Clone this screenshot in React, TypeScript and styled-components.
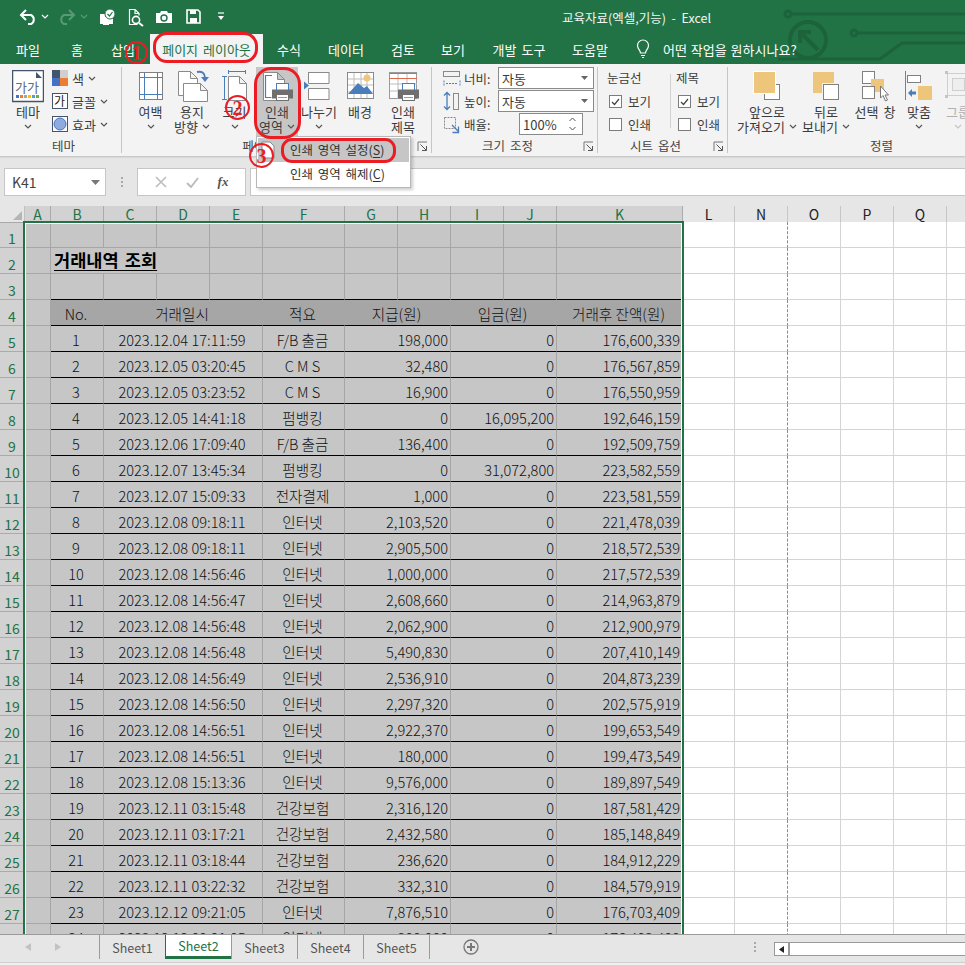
import React from 'react'
import styled, { createGlobalStyle } from 'styled-components'

const FONT = '"Noto Sans CJK KR", "Noto Sans", sans-serif'
const GREEN = '#217346'
const RED = '#ed1c24'
const COLS = '25px 26px 53px 53px 53px 53px 82px 53px 53px 53px 53px 126px 52px 53px 53px 53px 53px 53px'

const Global = createGlobalStyle`
  html, body { margin: 0; padding: 0; background: #fff; }
  body { font-family: ${FONT}; }
`

const Page = styled.div`
  position: relative;
  width: 965px;
  height: 965px;
  overflow: hidden;
  display: flex;
  flex-direction: column;
  background: #e6e6e6;
`

/* ---------- title bar and tabs ---------- */
const Head = styled.header`
  position: relative;
  height: 64px;
  background: ${GREEN};
  color: #fff;
`
const Circuit = styled.svg`
  position: absolute;
  left: 770px;
  top: 0;
`
const TitleBar = styled.div`
  position: relative;
  height: 34px;
  display: flex;
  align-items: center;
`
const Qat = styled.div`
  width: 240px;
  height: 34px;
  flex: none;
`
const Title = styled.div`
  margin-left: 322px;
  font-size: 12.5px;
  white-space: pre;
  color: #f2f7f4;
`
const Tabs = styled.nav`
  position: relative;
  height: 30px;
  display: flex;
  align-items: stretch;
`
const Tab = styled.div<{ w: number; active?: boolean }>`
  width: ${p => p.w}px;
  flex: none;
  display: flex;
  align-items: center;
  justify-content: center;
  font-size: 13px;
  word-spacing: 2px;
  white-space: nowrap;
  background: ${p => (p.active ? '#f3f3f3' : 'transparent')};
  color: ${p => (p.active ? GREEN : '#fff')};
  margin-left: ${p => (p.active ? '2px' : '0')};
`
const Ask = styled.div`
  margin-left: 16px;
  display: flex;
  align-items: center;
  gap: 12px;
  font-size: 13px;
  word-spacing: 1px;
`

/* ---------- ribbon ---------- */
const Ribbon = styled.div`
  height: 93px;
  flex: none;
  display: flex;
  background: #f3f3f3;
  border-bottom: 1px solid #c9c9c9;
  padding-top: 3px;
  box-sizing: border-box;
  overflow: hidden;
`
const Group = styled.section<{ w: number; pad?: number }>`
  position: relative;
  width: ${p => p.w}px;
  height: 86px;
  flex: none;
  box-sizing: border-box;
  display: flex;
  flex-direction: column;
  padding-left: ${p => p.pad ?? 0}px;
  border-right: 1px solid #c6c6c6;
`
const GroupBody = styled.div`
  height: 73px;
  display: flex;
  align-items: flex-start;
  flex: none;
`
const GroupFoot = styled.div`
  display: flex;
  align-items: center;
  height: 14px;
  margin-top: -1px;
`
const GroupLabel = styled.div`
  flex: 1;
  text-align: center;
  font-size: 12.5px;
  line-height: 14px;
  word-spacing: 2px;
  color: #444;
`
const Launcher = styled.svg`
  flex: none;
  margin-right: 3px;
`
const BigBtn = styled.div<{ w: number; active?: boolean }>`
  width: ${p => p.w}px;
  height: 69px;
  flex: none;
  box-sizing: border-box;
  padding-top: 3px;
  display: flex;
  flex-direction: column;
  align-items: center;
  background: ${p => (p.active ? '#c6c6c6' : 'transparent')};
  svg.big { display: block; flex: none; }
`
const BigLine = styled.div<{ dim?: boolean }>`
  font-size: 13px;
  line-height: 15px;
  height: 15px;
  white-space: nowrap;
  word-spacing: 2px;
  color: ${p => (p.dim ? '#b1b1b1' : '#3c3c3c')};
  display: flex;
  align-items: center;
  gap: 4px;
`
const SmallCol = styled.div`
  display: flex;
  flex-direction: column;
  gap: 7px;
  padding-top: 3px;
  margin-left: 2px;
`
const SmallRow = styled.div`
  display: flex;
  align-items: center;
  height: 16px;
  gap: 4px;
  font-size: 13px;
  color: #3c3c3c;
`
const SizeCol = styled.div`
  display: flex;
  flex-direction: column;
  gap: 1px;
  padding-left: 11px;
`
const SizeRow = styled.div`
  display: flex;
  align-items: center;
  height: 22px;
  font-size: 12.5px;
  color: #3c3c3c;
  span { width: 34px; margin-left: 3px; flex: none; }
`
const Field = styled.div<{ w: number; shift?: number }>`
  width: ${p => p.w}px;
  height: 22px;
  margin-left: ${p => p.shift ?? 0}px;
  box-sizing: border-box;
  border: 1px solid #8a8a8a;
  background: #fff;
  display: flex;
  align-items: center;
  justify-content: space-between;
  padding: 0 5px 0 3px;
  font-size: 13px;
  color: #3c3c3c;
`
const OptGrid = styled.div`
  display: grid;
  grid-template-columns: 63px 1fr;
  padding-left: 9px;
`
const OptCol = styled.div<{ line?: boolean }>`
  position: relative;
  padding-left: ${p => (p.line ? '6px' : '0')};
  ${p =>
    p.line &&
    `
    &:before {
      content: '';
      position: absolute;
      left: 0;
      top: 7px;
      height: 54px;
      width: 1px;
      background: #d2d2d2;
    }
  `}
`
const OptHead = styled.div`
  height: 23px;
  line-height: 22px;
  font-size: 12.5px;
  color: #3c3c3c;
`
const OptRow = styled.div`
  height: 23px;
  display: flex;
  align-items: center;
  gap: 6px;
  padding-left: 2px;
  font-size: 12.5px;
  color: #3c3c3c;
`
const Check = styled.div`
  width: 13px;
  height: 13px;
  box-sizing: border-box;
  border: 1px solid #7d7d7d;
  background: #fff;
  display: flex;
  align-items: center;
  justify-content: center;
`

/* ---------- formula bar ---------- */
const FormulaBar = styled.div`
  height: 49px;
  flex: none;
  box-sizing: border-box;
  padding: 10px 0 10px 4px;
  display: flex;
  align-items: stretch;
  background: #e6e6e6;
  border-top: 1px solid #d8d8d8;
`
const NameBox = styled.div`
  width: 102px;
  box-sizing: border-box;
  background: #fff;
  border: 1px solid #c6c6c6;
  display: flex;
  align-items: center;
  justify-content: space-between;
  padding: 0 5px 0 7px;
  font-size: 14px;
  color: #444;
`
const Dots = styled.div`
  width: 31px;
  display: flex;
  flex-direction: column;
  align-items: center;
  justify-content: center;
  gap: 2px;
  i { width: 2px; height: 2px; background: #a8a8a8; display: block; }
`
const FxBox = styled.div`
  width: 109px;
  box-sizing: border-box;
  background: #fff;
  border: 1px solid #c6c6c6;
  display: flex;
  align-items: center;
  justify-content: space-around;
  padding: 0 7px;
`
const FxText = styled.span`
  font-family: "Liberation Serif", serif;
  font-style: italic;
  font-weight: 700;
  font-size: 13px;
  color: #555;
`
const FormulaInput = styled.div`
  flex: 1;
  margin-left: 4px;
  background: #fff;
  border: 1px solid #c6c6c6;
  border-right: 0;
`

/* ---------- sheet ---------- */
const Sheet = styled.div`
  position: relative;
  flex: none;
  height: 728px;
  overflow: hidden;
  background: #fff;
`
const HeadRow = styled.div`
  display: grid;
  grid-template-columns: ${COLS};
  height: 16px;
`
const Corner = styled.div`
  background: #e6e6e6;
  border-right: 1px solid #c0c0c0;
  border-bottom: 1px solid #a8a8a8;
  position: relative;
  &:after {
    content: '';
    position: absolute;
    right: 2px;
    bottom: 2px;
    border-style: solid;
    border-width: 0 0 9px 9px;
    border-color: transparent transparent #b5b5b5 transparent;
  }
`
const ColHead = styled.div<{ sel?: boolean }>`
  box-sizing: border-box;
  display: flex;
  align-items: center;
  justify-content: center;
  font-size: 14px;
  line-height: 16px;
  background: ${p => (p.sel ? '#d2d2d2' : '#e6e6e6')};
  color: ${p => (p.sel ? GREEN : '#222')};
  border-right: 1px solid ${p => (p.sel ? '#ababab' : '#c6c6c6')};
  border-bottom: 1px solid ${p => (p.sel ? GREEN : '#a8a8a8')};
`
const Row = styled.div`
  display: grid;
  grid-template-columns: ${COLS};
  height: 26px;
`
const RowHead = styled.div`
  box-sizing: border-box;
  background: #d2d2d2;
  color: ${GREEN};
  font-size: 14px;
  line-height: 18px;
  display: flex;
  align-items: flex-end;
  justify-content: center;
  border-right: 1px solid #ababab;
  border-bottom: 1px solid #ababab;
`
const Cell = styled.div<{
  span?: number
  align?: 'left' | 'center' | 'right'
  black?: boolean
  noRight?: boolean
  head?: boolean
}>`
  grid-column: span ${p => p.span ?? 1};
  box-sizing: border-box;
  min-width: 0;
  background: ${p => (p.head ? '#a6a6a6' : '#c6c6c6')};
  color: #111;
  font-size: 14.6px;
  font-weight: 300;
  line-height: 23px;
  white-space: nowrap;
  overflow: hidden;
  padding: 0 2px 0 0;
  text-align: ${p => p.align ?? 'center'};
  display: flex;
  flex-direction: column;
  justify-content: flex-end;
  border-right: 1px solid ${p => (p.noRight ? 'transparent' : '#a6a6a6')};
  border-bottom: 1px solid ${p => (p.black ? '#000' : '#a6a6a6')};
`
const Blank = styled.div<{ dashed?: boolean }>`
  box-sizing: border-box;
  background: #fff;
  border-right: 1px ${p => (p.dashed ? 'dashed #8a8a8a' : 'solid #d4d4d4')};
  border-bottom: 1px solid #d4d4d4;
`
const SheetTitle = styled.div`
  grid-column: span 3;
  box-sizing: border-box;
  background: #c6c6c6;
  border-right: 1px solid #a6a6a6;
  border-bottom: 1px solid #a6a6a6;
  padding-left: 3px;
  font-size: 17.6px;
  font-weight: 700;
  line-height: 24px;
  color: #000;
  text-decoration: underline;
  text-underline-offset: 3px;
  white-space: nowrap;
  word-spacing: 2px;
`
const Selection = styled.div`
  position: absolute;
  left: 23px;
  top: 15px;
  width: 661px;
  height: 800px;
  box-sizing: border-box;
  border: 2px solid ${GREEN};
  box-shadow: inset 0 0 0 1px #fff;
  pointer-events: none;
`

/* ---------- sheet tabs ---------- */
const Strip = styled.div`
  height: 28px;
  flex: none;
  box-sizing: border-box;
  display: flex;
  align-items: flex-start;
  background: #e6e6e6;
  border-top: 1px solid #9b9b9b;
`
const StripNav = styled.div`
  width: 99px;
  height: 24px;
  flex: none;
  display: flex;
  align-items: center;
  gap: 24px;
  padding-left: 25px;
  box-sizing: border-box;
`
const SheetTab = styled.div<{ active?: boolean }>`
  width: 66px;
  height: 24px;
  flex: none;
  box-sizing: border-box;
  display: flex;
  align-items: center;
  justify-content: center;
  font-size: 12.5px;
  border-left: 1px solid #9b9b9b;
  background: ${p => (p.active ? '#fff' : 'transparent')};
  color: ${p => (p.active ? GREEN : '#555')};
  ${p => p.active && `height: 24px; border-bottom: 3px solid ${GREEN}; border-left: 1px solid ${GREEN}; margin-top: 0;`}
`
const PlusWrap = styled.div`
  width: 306px;
  height: 24px;
  box-sizing: border-box;
  border-left: 1px solid #9b9b9b;
  padding-left: 33px;
  display: flex;
  align-items: center;
`
const ScrollDots = styled(Dots)`
  width: 39px;
  height: 24px;
  margin-right: 0;
`
const ScrollBar = styled.div`
  flex: 1;
  height: 14px;
  margin-top: 7px;
  box-sizing: border-box;
  background: #fff;
  border: 1px solid #999;
  border-right: 0;
  display: flex;
`
const ScrollArrow = styled.div`
  width: 13px;
  display: flex;
  align-items: center;
  justify-content: center;
  border-right: 2px solid #999;
`
const Foot = styled.div`
  flex: 1;
  background: #f0f0f0;
  border-top: 1px solid #cfcfcf;
`

/* ---------- dropdown and red marks ---------- */
const Menu = styled.div`
  position: absolute;
  left: 256px;
  top: 136px;
  width: 155px;
  height: 52px;
  box-sizing: border-box;
  background: #fff;
  border: 1px solid #b8b8b8;
  box-shadow: 2px 2px 3px rgba(0, 0, 0, 0.2);
  padding: 1px;
`
const MenuItem = styled.div<{ hot?: boolean }>`
  height: 24px;
  line-height: 23px;
  padding-left: 32px;
  font-size: 12.5px;
  word-spacing: 2px;
  white-space: nowrap;
  color: #333;
  background: ${p => (p.hot ? '#c6c6c6' : 'transparent')};
  u { text-underline-offset: 2px; }
`
const MenuIcon = styled.svg`
  position: absolute;
  left: 4px;
  top: 4px;
`
const Mark = styled.div<{ x: number; y: number; w: number; h: number; r: number }>`
  position: absolute;
  left: ${p => p.x}px;
  top: ${p => p.y}px;
  width: ${p => p.w}px;
  height: ${p => p.h}px;
  box-sizing: border-box;
  border: 3px solid ${RED};
  border-radius: ${p => p.r}px;
`
const Num = styled.div<{ x: number; y: number; s: number }>`
  position: absolute;
  left: ${p => p.x}px;
  top: ${p => p.y}px;
  width: ${p => p.s}px;
  height: ${p => p.s}px;
  box-sizing: border-box;
  border: 2px solid ${RED};
  border-radius: 50%;
  display: flex;
  align-items: center;
  justify-content: center;
  font-family: "Liberation Serif", serif;
  font-weight: 700;
  font-size: 20px;
  line-height: 1;
  color: ${RED};
`

/* ---------- icons ---------- */
const Chev = ({ c = '#555' }: { c?: string }) => (
  <svg width="8" height="5" viewBox="0 0 8 5">
    <path d="M1 1l3 3 3-3" fill="none" stroke={c} strokeWidth="1.2" />
  </svg>
)

const Printer = ({ x, y }: { x: number; y: number }) => (
  <g transform={`translate(${x} ${y})`}>
    <rect x="4.5" y="0.5" width="12" height="7" fill="#fff" stroke="#4a7ebb" />
    <path d="M0 6.5h21v9h-21z" fill="#6f6f6f" />
    <rect x="4.5" y="11.5" width="12" height="6" fill="#fff" stroke="#6f6f6f" />
    <path d="M6 14.5h9" stroke="#9a9a9a" />
  </g>
)

const Big = ({ cx, w = 40, children }: { cx: number; w?: number; children: React.ReactNode }) => (
  <svg className="big" width={w} height="34" viewBox={`${cx - w / 2} 70 ${w} 34`}>
    {children}
  </svg>
)

const Page1 = ({ x, y, w, h }: { x: number; y: number; w: number; h: number }) => (
  <path
    d={`M${x}.5 ${y}.5h${w - 7}l7 7v${h - 7}h-${w}z M${x + w - 7}.5 ${y}.5v7h7`}
    fill="#fff"
    stroke="#8a8a8a"
  />
)

const LauncherIcon = () => (
  <Launcher width="11" height="11" viewBox="0 0 11 11">
    <path d="M1 10V1h9" fill="none" stroke="#777" />
    <path d="M3.5 3.5l5.5 5.5M9.5 5v4.5H5" fill="none" stroke="#555" />
  </Launcher>
)

const Circ = () => (
  <svg width="195" height="64" viewBox="0 0 195 64" fill="none" stroke="#1c633c" strokeWidth="3">
    <circle cx="18" cy="14" r="3" />
    <path d="M21 14h174" />
    <circle cx="38" cy="40" r="18" strokeWidth="4" />
    <path d="M31 33l17 17M30 43v-11h11" strokeWidth="4" />
    <circle cx="84" cy="33" r="3" />
    <path d="M87 33h108" />
    <path d="M8 59h102l22-16h63" />
  </svg>
)

const QatIcons = () => (
  <svg width="240" height="34" viewBox="0 0 240 34">
    <g fill="none" stroke="#fff" strokeWidth="2">
      <path d="M22 15h9a5 5 0 0 1 0 9h-3M26 10l-5 5 5 5" />
      <path d="M42 15l3 3 3-3" strokeWidth="1.2" />
    </g>
    <g fill="none" stroke="#579a77" strokeWidth="2">
      <path d="M73 15h-9a5 5 0 0 0 0 9h3M69 10l5 5-5 5" />
      <path d="M81 15l3 3 3-3" strokeWidth="1.2" />
    </g>
    <path d="M100 14h5v-3h3v3h-3v3h8v7h-4v1h-6v-1h-3z" fill="#fff" />
    <circle cx="110" cy="14" r="5" fill="#fff" stroke={GREEN} />
    <path d="M107.5 14l2 2 3-4" stroke={GREEN} strokeWidth="1.2" fill="none" />
    <path d="M135 9.5h-5.5v15h8M135 9.5l4 4v2M135 9.5v4h4" fill="none" stroke="#fff" strokeWidth="1.2" />
    <circle cx="136" cy="20" r="3.6" fill="none" stroke="#fff" strokeWidth="1.6" />
    <path d="M139 23l4 3" stroke="#fff" strokeWidth="2" />
    <path d="M156 13h4l1-2h6l1 2h4v10h-16z" fill="#fff" />
    <circle cx="164" cy="18" r="3" fill="none" stroke={GREEN} strokeWidth="1.4" />
    <path d="M187 10h11l2 2v11h-13z" fill="none" stroke="#fff" strokeWidth="1.6" />
    <path d="M190 10h6v4h-6zM190 18h7v5h-7z" fill="#fff" />
    <path d="M218 13h6" stroke="#fff" strokeWidth="1.2" />
    <path d="M218 16h6l-3 4z" fill="#fff" />
  </svg>
)

/* ---------- data ---------- */
const NET = '인터넷'
const HEALTH = '건강보험'
const FB = 'F/B 출금'
const BANK = '펌뱅킹'
const rows: [string, string, string, string, string][] = [
  ['2023.12.04 17:11:59', FB, '198,000', '0', '176,600,339'],
  ['2023.12.05 03:20:45', 'C M S', '32,480', '0', '176,567,859'],
  ['2023.12.05 03:23:52', 'C M S', '16,900', '0', '176,550,959'],
  ['2023.12.05 14:41:18', BANK, '0', '16,095,200', '192,646,159'],
  ['2023.12.06 17:09:40', FB, '136,400', '0', '192,509,759'],
  ['2023.12.07 13:45:34', BANK, '0', '31,072,800', '223,582,559'],
  ['2023.12.07 15:09:33', '전자결제', '1,000', '0', '223,581,559'],
  ['2023.12.08 09:18:11', NET, '2,103,520', '0', '221,478,039'],
  ['2023.12.08 09:18:11', NET, '2,905,500', '0', '218,572,539'],
  ['2023.12.08 14:56:46', NET, '1,000,000', '0', '217,572,539'],
  ['2023.12.08 14:56:47', NET, '2,608,660', '0', '214,963,879'],
  ['2023.12.08 14:56:48', NET, '2,062,900', '0', '212,900,979'],
  ['2023.12.08 14:56:48', NET, '5,490,830', '0', '207,410,149'],
  ['2023.12.08 14:56:49', NET, '2,536,910', '0', '204,873,239'],
  ['2023.12.08 14:56:50', NET, '2,297,320', '0', '202,575,919'],
  ['2023.12.08 14:56:51', NET, '2,922,370', '0', '199,653,549'],
  ['2023.12.08 14:56:51', NET, '180,000', '0', '199,473,549'],
  ['2023.12.08 15:13:36', NET, '9,576,000', '0', '189,897,549'],
  ['2023.12.11 03:15:48', HEALTH, '2,316,120', '0', '187,581,429'],
  ['2023.12.11 03:17:21', HEALTH, '2,432,580', '0', '185,148,849'],
  ['2023.12.11 03:18:44', HEALTH, '236,620', '0', '184,912,229'],
  ['2023.12.11 03:22:32', HEALTH, '332,310', '0', '184,579,919'],
  ['2023.12.12 09:21:05', NET, '7,876,510', '0', '176,703,409'],
  ['2023.12.12 09:21:05', NET, '300,000', '0', '176,403,409'],
]

const selCols = ['A', 'B', 'C', 'D', 'E', 'F', 'G', 'H', 'I', 'J', 'K']
const offCols = ['L', 'N', 'O', 'P', 'Q', '']

const RightBlanks = () => (
  <>
    <Blank />
    <Blank dashed />
    <Blank />
    <Blank />
    <Blank />
    <Blank />
  </>
)

const Top = ({ n, black, title }: { n: number; black?: boolean; title?: boolean }) => (
  <Row>
    <RowHead>{n}</RowHead>
    <Cell />
    {title ? <SheetTitle>거래내역 조회</SheetTitle> : null}
    {(title ? ['E', 'F', 'G', 'H', 'I', 'J', 'K'] : ['B', 'C', 'D', 'E', 'F', 'G', 'H', 'I', 'J', 'K']).map(c => (
      <Cell key={c} black={black} />
    ))}
    <Blank />
    <Blank dashed />
    <Blank />
    <Blank />
    <Blank />
    <Blank />
  </Row>
)

export default function App() {
  return (
    <Page>
      <Global />
      <Head>
        <Circuit as="div" style={{ width: 195, height: 64 }}>
          <Circ />
        </Circuit>
        <TitleBar>
          <Qat>
            <QatIcons />
          </Qat>
          <Title>교육자료(엑셀,기능)  -  Excel</Title>
        </TitleBar>
        <Tabs>
          <Tab w={56}>파일</Tab>
          <Tab w={42}>홈</Tab>
          <Tab w={50}>삽입</Tab>
          <Tab w={113} active>
            페이지 레이아웃
          </Tab>
          <Tab w={52}>수식</Tab>
          <Tab w={62}>데이터</Tab>
          <Tab w={52}>검토</Tab>
          <Tab w={48}>보기</Tab>
          <Tab w={84}>개발 도구</Tab>
          <Tab w={58}>도움말</Tab>
          <Ask>
            <svg width="16" height="20" viewBox="0 0 16 20" fill="none" stroke="#fff" strokeWidth="1.2">
              <path d="M5.5 14c0-3-3-4-3-7.500a5.500 5.500 0 0 1 11 0c0 3.500-3 4.500-3 7.500z" />
              <path d="M6 16.500h4M7 18.500h2" />
            </svg>
            어떤 작업을 원하시나요?
          </Ask>
        </Tabs>
      </Head>

      <Ribbon>
        <Group w={122} pad={6}>
          <GroupBody>
            <BigBtn w={44}>
              <svg className="big" width="32" height="34" viewBox="12 70 32 34">
                <rect x="12.500" y="70.500" width="31" height="31" fill="#fff" stroke="#44546a" strokeWidth="1.500" />
                <path d="M36 72l6 6h-6z" fill="#44546a" />
                <text x="15" y="92" fontSize="13" fill="#5a6b85" fontFamily={FONT}>
                  가가
                </text>
                {['#4472c4', '#ed7d31', '#a5a5a5', '#ffc000', '#5b9bd5', '#70ad47'].map((c, i) => (
                  <rect key={c} x={16 + i * 4} y="95" width="3" height="3" fill={c} />
                ))}
              </svg>
              <BigLine>테마</BigLine>
              <BigLine>
                <Chev />
              </BigLine>
            </BigBtn>
            <SmallCol>
              <SmallRow>
                <svg width="16" height="16" viewBox="0 0 16 16">
                  <rect width="8" height="8" fill="#44546a" />
                  <rect x="8" width="8" height="8" fill="#cfcfcf" />
                  <rect y="8" width="8" height="8" fill="#4472c4" />
                  <rect x="8" y="8" width="8" height="8" fill="#ed7d31" />
                </svg>
                색 <Chev />
              </SmallRow>
              <SmallRow>
                <svg width="16" height="16" viewBox="0 0 16 16">
                  <rect x="0.500" y="0.500" width="15" height="15" fill="#fff" stroke="#44546a" />
                  <text x="2" y="13" fontSize="12" fill="#222" fontFamily={FONT}>
                    가
                  </text>
                </svg>
                글꼴 <Chev />
              </SmallRow>
              <SmallRow>
                <svg width="16" height="16" viewBox="0 0 16 16">
                  <rect x="0.500" y="0.500" width="15" height="15" fill="#fff" stroke="#44546a" />
                  <circle cx="8" cy="8" r="6" fill="#8faadc" stroke="#4472c4" />
                </svg>
                효과 <Chev />
              </SmallRow>
            </SmallCol>
          </GroupBody>
          <GroupFoot>
            <GroupLabel>테마</GroupLabel>
          </GroupFoot>
        </Group>

        <Group w={310} pad={8}>
          <GroupBody>
            <BigBtn w={41}>
              <Big cx={151}>
                <rect x="139.500" y="72.500" width="23" height="27" fill="#fff" stroke="#808080" />
                <path d="M144.500 73v26M157.500 73v26M140 77.500h22M140 94.500h22" stroke="#4a7ebb" />
              </Big>
              <BigLine>여백</BigLine>
              <BigLine>
                <Chev />
              </BigLine>
            </BigBtn>
            <BigBtn w={42}>
              <Big cx={192}>
                <Page1 x={178} y={71} w={19} h={24} />
                <Page1 x={183} y={83} w={24} h={18} />
                <path d="M197 72c5-1 8 1 8 6" fill="none" stroke="#4a7ebb" strokeWidth="2" />
                <path d="M201 77h8l-4 5z" fill="#4a7ebb" />
              </Big>
              <BigLine>용지</BigLine>
              <BigLine>
                방향 <Chev />
              </BigLine>
            </BigBtn>
            <BigBtn w={43}>
              <Big cx={236}>
                <Page1 x={229} y={76} w={18} h={24} />
                <path d="M229 71.500h18M229.500 69v5M246.500 69v5M225.500 76v24M223 76.500h5M223 99.500h5" stroke="#4a7ebb" fill="none" />
              </Big>
              <BigLine>크기</BigLine>
              <BigLine>
                <Chev />
              </BigLine>
            </BigBtn>
            <BigBtn w={42} active>
              <Big cx={277}>
                <Page1 x={263} y={72} w={21} h={28} />
                <path d="M272 75.500h-6.500v22h6" fill="none" stroke="#4a7ebb" strokeWidth="1.200" />
                <Printer x={272} y={83} />
              </Big>
              <BigLine>인쇄</BigLine>
              <BigLine>
                영역 <Chev />
              </BigLine>
            </BigBtn>
            <BigBtn w={42}>
              <Big cx={319}>
                <path d="M308.500 72v11.500h20.500V72M308.500 100v-11.500h20.500V100M308 72.500h21M308 99.500h21" fill="#fff" stroke="#8a8a8a" />
                <path d="M304 81.500l5 4-5 4z" fill="#4a7ebb" />
              </Big>
              <BigLine>나누기</BigLine>
              <BigLine>
                <Chev />
              </BigLine>
            </BigBtn>
            <BigBtn w={40}>
              <Big cx={360}>
                <rect x="347.500" y="72.500" width="26" height="26" fill="#fff" stroke="#8a8a8a" />
                <path d="M354 73v25M361 73v25M367 73v25M348 79h25M348 85h25M348 92h25" stroke="#bdbdbd" />
                <circle cx="367" cy="78" r="3.500" fill="#edc67c" />
                <path d="M348 94l10-11 6 5 3-2 6 8z" fill="#4a7ebb" />
              </Big>
              <BigLine>배경</BigLine>
            </BigBtn>
            <BigBtn w={46}>
              <Big cx={403}>
                <rect x="389.500" y="72.500" width="27" height="26" fill="#fff" stroke="#9a9a9a" />
                <path d="M398 73v26M407 73v26M390 84h27M390 91h27" stroke="#bdbdbd" />
                <path d="M389 73.500h28M389 78.500h28" stroke="#d9694a" />
                <Printer x={398} y={83} />
              </Big>
              <BigLine>인쇄</BigLine>
              <BigLine>제목</BigLine>
            </BigBtn>
          </GroupBody>
          <GroupFoot>
            <GroupLabel>페이지 설정</GroupLabel>
            <LauncherIcon />
          </GroupFoot>
        </Group>

        <Group w={166}>
          <GroupBody>
            <SizeCol>
              <SizeRow>
                <svg width="18" height="20" viewBox="0 0 18 20" fill="none">
                  <rect x="0.500" y="3.500" width="16" height="5" stroke="#8a8a8a" />
                  <path d="M1 12.500v6M17 12.500v6M3 15.500h12" stroke="#4a7ebb" strokeDasharray="2 1" />
                </svg>
                <span>너비:</span>
                <Field w={96}>
                  자동
                  <svg width="7" height="4" viewBox="0 0 7 4">
                    <path d="M0 0h7l-3.500 4z" fill="#666" />
                  </svg>
                </Field>
              </SizeRow>
              <SizeRow>
                <svg width="18" height="20" viewBox="0 0 18 20" fill="none">
                  <rect x="10.500" y="2.500" width="5" height="16" stroke="#8a8a8a" />
                  <path d="M4 2v16M1 4.500l3-3 3 3M1 15.500l3 3 3-3" stroke="#4a7ebb" strokeWidth="1.300" />
                </svg>
                <span>높이:</span>
                <Field w={96}>
                  자동
                  <svg width="7" height="4" viewBox="0 0 7 4">
                    <path d="M0 0h7l-3.500 4z" fill="#666" />
                  </svg>
                </Field>
              </SizeRow>
              <SizeRow>
                <svg width="18" height="20" viewBox="0 0 18 20" fill="none">
                  <rect x="1.500" y="3.500" width="11" height="11" stroke="#8a8a8a" strokeDasharray="2 1" />
                  <path d="M9 11l7 7M15.500 12.500v6h-6" stroke="#4a7ebb" strokeWidth="1.300" />
                </svg>
                <span>배율:</span>
                <Field w={64} shift={21}>
                  100%
                  <svg width="9" height="18" viewBox="0 0 9 18" fill="none" stroke="#555">
                    <path d="M1.500 6l3-3 3 3M1.500 12l3 3 3-3" />
                  </svg>
                </Field>
              </SizeRow>
            </SizeCol>
          </GroupBody>
          <GroupFoot>
            <GroupLabel>크기 조정</GroupLabel>
            <LauncherIcon />
          </GroupFoot>
        </Group>

        <Group w={130}>
          <GroupBody>
            <OptGrid>
              <OptCol>
                <OptHead>눈금선</OptHead>
                <OptRow>
                  <Check>
                    <svg width="9" height="8" viewBox="0 0 9 8">
                      <path d="M1 4l2.500 2.500L8 1" fill="none" stroke="#444" strokeWidth="1.200" />
                    </svg>
                  </Check>
                  보기
                </OptRow>
                <OptRow>
                  <Check />
                  인쇄
                </OptRow>
              </OptCol>
              <OptCol line>
                <OptHead>제목</OptHead>
                <OptRow>
                  <Check>
                    <svg width="9" height="8" viewBox="0 0 9 8">
                      <path d="M1 4l2.500 2.500L8 1" fill="none" stroke="#444" strokeWidth="1.200" />
                    </svg>
                  </Check>
                  보기
                </OptRow>
                <OptRow>
                  <Check />
                  인쇄
                </OptRow>
              </OptCol>
            </OptGrid>
          </GroupBody>
          <GroupFoot>
            <GroupLabel>시트 옵션</GroupLabel>
            <LauncherIcon />
          </GroupFoot>
        </Group>

        <Group w={300} pad={8}>
          <GroupBody>
            <BigBtn w={62}>
              <Big cx={767}>
                <rect x="764.500" y="84.500" width="15" height="15" fill="#fff" stroke="#808080" />
                <rect x="753" y="71" width="23" height="23" fill="#fff" />
                <rect x="754" y="72" width="21" height="21" fill="#edc67c" />
              </Big>
              <BigLine>앞으로</BigLine>
              <BigLine>
                가져오기 <Chev />
              </BigLine>
            </BigBtn>
            <BigBtn w={56}>
              <Big cx={826}>
                <rect x="813" y="72" width="21" height="21" fill="#edc67c" />
                <rect x="822" y="83" width="18" height="18" fill="#f3f3f3" />
                <rect x="823.500" y="84.500" width="15" height="15" fill="#fff" stroke="#808080" />
              </Big>
              <BigLine>뒤로</BigLine>
              <BigLine>
                보내기 <Chev />
              </BigLine>
            </BigBtn>
            <BigBtn w={42}>
              <Big cx={875}>
                <rect x="862.500" y="71.500" width="12" height="12" fill="#fff" stroke="#808080" />
                <rect x="871" y="79" width="13" height="13" fill="#edc67c" />
                <rect x="862.500" y="86.500" width="12" height="12" fill="#fff" stroke="#808080" />
                <path d="M880.500 86v12l2.500-2.500 2.500 5.500 2-1-2.500-5h3.500z" fill="#fff" stroke="#777" />
              </Big>
              <BigLine>선택 창</BigLine>
            </BigBtn>
            <BigBtn w={46}>
              <Big cx={919}>
                <path d="M905.500 71v29" stroke="#808080" />
                <rect x="907.500" y="75.500" width="13" height="7" fill="#fff" stroke="#808080" />
                <rect x="918" y="86" width="14" height="14" fill="#edc67c" />
                <path d="M908 93l4-4v2.500h4v3h-4v2.500z" fill="#4a7ebb" />
              </Big>
              <BigLine>맞춤</BigLine>
              <BigLine>
                <Chev />
              </BigLine>
            </BigBtn>
            <BigBtn w={32}>
              <Big cx={958}>
                <rect x="947.500" y="73.500" width="22" height="22" fill="none" stroke="#cfcfcf" />
                <rect x="952.500" y="78.500" width="12" height="12" fill="#eee" stroke="#cfcfcf" />
                <path d="M945 71h3v3h-3zM945 95h3v3h-3z" fill="#c4c4c4" />
              </Big>
              <BigLine dim>그룹</BigLine>
              <BigLine>
                <Chev c="#c4c4c4" />
              </BigLine>
            </BigBtn>
          </GroupBody>
          <GroupFoot>
            <GroupLabel>정렬</GroupLabel>
          </GroupFoot>
        </Group>
      </Ribbon>

      <FormulaBar>
        <NameBox>
          K41
          <svg width="9" height="5" viewBox="0 0 9 5">
            <path d="M0 0h9l-4.500 5z" fill="#777" />
          </svg>
        </NameBox>
        <Dots>
          <i />
          <i />
          <i />
        </Dots>
        <FxBox>
          <svg width="12" height="12" viewBox="0 0 12 12">
            <path d="M1 1l10 10M11 1L1 11" stroke="#bdbdbd" strokeWidth="1.600" />
          </svg>
          <svg width="13" height="11" viewBox="0 0 13 11">
            <path d="M1 6l4 4 7-9" fill="none" stroke="#bdbdbd" strokeWidth="2" />
          </svg>
          <FxText>fx</FxText>
        </FxBox>
        <FormulaInput />
      </FormulaBar>

      <Sheet>
        <HeadRow>
          <Corner />
          {selCols.map(c => (
            <ColHead key={c} sel>
              {c}
            </ColHead>
          ))}
          {offCols.map(c => (
            <ColHead key={c}>{c}</ColHead>
          ))}
        </HeadRow>
        <Top n={1} />
        <Top n={2} title />
        <Top n={3} black />
        <Row>
          <RowHead>4</RowHead>
          <Cell />
          <Cell head black noRight>
            No.
          </Cell>
          <Cell head black noRight span={3}>
            거래일시
          </Cell>
          <Cell head black noRight>
            적요
          </Cell>
          <Cell head black noRight span={2}>
            지급(원)
          </Cell>
          <Cell head black noRight span={2}>
            입금(원)
          </Cell>
          <Cell head black noRight>
            거래후 잔액(원)
          </Cell>
          <RightBlanks />
        </Row>
        {rows.map((r, i) => (
          <Row key={i}>
            <RowHead>{i + 5}</RowHead>
            <Cell />
            <Cell black>{i + 1}</Cell>
            <Cell black span={3}>
              {r[0]}
            </Cell>
            <Cell black>{r[1]}</Cell>
            <Cell black span={2} align="right">
              {r[2]}
            </Cell>
            <Cell black span={2} align="right">
              {r[3]}
            </Cell>
            <Cell black align="right">
              {r[4]}
            </Cell>
            <RightBlanks />
          </Row>
        ))}
        <Selection />
      </Sheet>

      <Strip>
        <StripNav>
          <svg width="6" height="8" viewBox="0 0 6 8">
            <path d="M6 0v8L0 4z" fill="#c2c2c2" />
          </svg>
          <svg width="6" height="8" viewBox="0 0 6 8">
            <path d="M0 0v8l6-4z" fill="#c2c2c2" />
          </svg>
        </StripNav>
        <SheetTab>Sheet1</SheetTab>
        <SheetTab active>Sheet2</SheetTab>
        <SheetTab>Sheet3</SheetTab>
        <SheetTab>Sheet4</SheetTab>
        <SheetTab>Sheet5</SheetTab>
        <PlusWrap>
          <svg width="16" height="16" viewBox="0 0 16 16" fill="none" stroke="#777">
            <circle cx="8" cy="8" r="7" strokeWidth="1.300" />
            <path d="M8 4v8M4 8h8" strokeWidth="2" />
          </svg>
        </PlusWrap>
        <ScrollDots>
          <i />
          <i />
          <i />
        </ScrollDots>
        <ScrollBar>
          <ScrollArrow>
            <svg width="5" height="7" viewBox="0 0 5 7">
              <path d="M5 0v7L0 3.500z" fill="#222" />
            </svg>
          </ScrollArrow>
        </ScrollBar>
      </Strip>
      <Foot />

      <Menu>
        <MenuIcon width="14" height="18" viewBox="0 0 14 18" fill="none" stroke="#888">
          <path d="M1 1h8l4 4v12H1z" fill="#fff" />
        </MenuIcon>
        <MenuItem hot>
          인쇄 영역 설정(<u>S</u>)
        </MenuItem>
        <MenuItem>
          인쇄 영역 해제(<u>C</u>)
        </MenuItem>
      </Menu>

      <Mark x={153} y={32} w={105} h={31} r={14} />
      <Mark x={254} y={67} w={47} h={72} r={17} />
      <Mark x={281} y={138} w={115} h={25} r={11} />
      <Num x={125} y={41} s={23}>
        1
      </Num>
      <Num x={225} y={95} s={25}>
        2
      </Num>
      <Num x={249} y={143} s={25}>
        3
      </Num>
    </Page>
  )
}
